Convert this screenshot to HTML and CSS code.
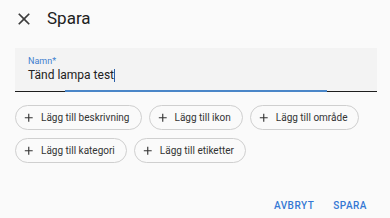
FILE: index.html
```html
<!DOCTYPE html>
<html lang="sv">
<head>
<meta charset="utf-8">
<link rel="stylesheet" href="styles.css">
</head>
<body>
  <div class="dialog">
    <header class="header">
      <svg class="close" viewBox="0 0 24 24" width="20" height="20"><path d="M19 6.41L17.59 5 12 10.59 6.41 5 5 6.41 10.59 12 5 17.59 6.41 19 12 13.41 17.59 19 19 17.59 13.41 12z"/></svg>
      <h1 class="title">Spara</h1>
    </header>
    <div class="field">
      <div class="label">Namn*</div>
      <div class="value">Tänd lampa test<span class="caret"></span></div>
      <div class="focus-line"></div>
    </div>
    <div class="chips">
      <button class="chip"><svg viewBox="0 0 24 24"><path d="M19,13H13V19H11V13H5V11H11V5H13V11H19V13Z"/></svg><span>Lägg till beskrivning</span></button>
      <button class="chip"><svg viewBox="0 0 24 24"><path d="M19,13H13V19H11V13H5V11H11V5H13V11H19V13Z"/></svg><span>Lägg till ikon</span></button>
      <button class="chip"><svg viewBox="0 0 24 24"><path d="M19,13H13V19H11V13H5V11H11V5H13V11H19V13Z"/></svg><span>Lägg till område</span></button>
      <button class="chip"><svg viewBox="0 0 24 24"><path d="M19,13H13V19H11V13H5V11H11V5H13V11H19V13Z"/></svg><span>Lägg till kategori</span></button>
      <button class="chip"><svg viewBox="0 0 24 24"><path d="M19,13H13V19H11V13H5V11H11V5H13V11H19V13Z"/></svg><span>Lägg till etiketter</span></button>
    </div>
    <footer class="actions">
      <button class="btn">Avbryt</button>
      <button class="btn">Spara</button>
    </footer>
  </div>
</body>
</html>
```

FILE: styles.css
```css
* { box-sizing: border-box; }
html, body { margin: 0; padding: 0; }
body {
  background: #fafafa;
  font-family: Roboto, "Noto Sans", sans-serif;
  color: #212121;
  width: 390px;
  height: 218px;
  overflow: hidden;
}
.dialog { display: flex; flex-direction: column; }
.header {
  display: flex;
  align-items: center;
  height: 37px;
}
.close {
  fill: #3c3c3c;
  margin-left: 14px;
  flex: none;
}
.title {
  margin: 0 0 0 13px;
  font-size: 17px;
  font-weight: 400;
  line-height: 37px;
  color: #212121;
}
.field {
  position: relative;
  margin: 11px 13px 0 15px;
  height: 44px;
  padding: 9px 0 0 13px;
  background: #f3f3f3;
  border-bottom: 1px solid #1e1e1e;
}
.label {
  font-size: 9px;
  line-height: 9px;
  color: #3f7fcf;
}
.value {
  margin-top: 2px;
  font-size: 12px;
  line-height: 14px;
  color: #222;
  display: flex;
  align-items: center;
}
.caret {
  display: inline-block;
  width: 1px;
  height: 13px;
  background: #2a5fa8;
}
.focus-line {
  position: absolute;
  left: 50px;
  right: 50px;
  bottom: -1px;
  height: 2px;
  background: #4a86c8;
}
.chips {
  display: flex;
  flex-wrap: wrap;
  gap: 8px 7px;
  margin: 13px 13px 0 15px;
}
.chip {
  display: flex;
  align-items: center;
  height: 25px;
  padding: 0 11px 0 6px;
  border: 1px solid #cfcfcf;
  border-radius: 13px;
  background: transparent;
  font-family: Roboto, "Noto Sans", sans-serif;
  font-size: 10px;
  color: #333;
  gap: 5.5px;
}
.chip svg {
  width: 13.5px;
  height: 13.5px;
  fill: #333;
  flex: none;
}
.actions {
  display: flex;
  justify-content: flex-end;
  gap: 19px;
  margin-top: 37px;
  padding-right: 23px;
}
.btn {
  border: 0;
  background: none;
  padding: 0;
  font-family: Roboto, "Noto Sans", sans-serif;
  font-weight: 500;
  font-size: 10px;
  line-height: 12px;
  letter-spacing: 0.5px;
  text-transform: uppercase;
  color: #3578d4;
}
```
